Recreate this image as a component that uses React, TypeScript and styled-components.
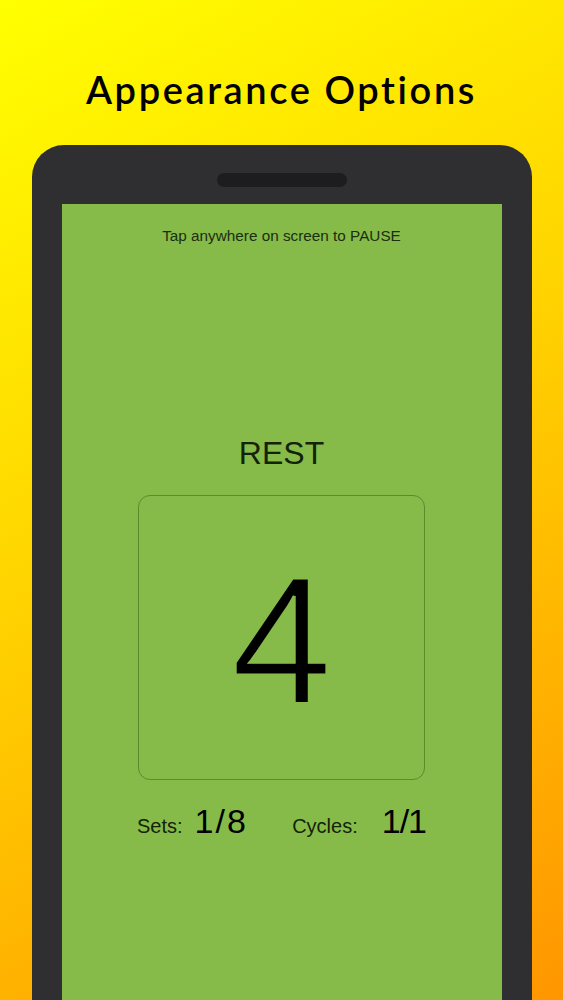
import React from "react";
import styled, { createGlobalStyle } from "styled-components";

const Global = createGlobalStyle`
  html, body { margin: 0; padding: 0; }
  body { font-family: "Liberation Sans", Arial, sans-serif; }
`;

const Page = styled.div`
  width: 563px;
  height: 1000px;
  overflow: hidden;
  background: linear-gradient(150deg, #ffff00 0%, #ffd400 45%, #ff9600 100%);
  display: flex;
  flex-direction: column;
  align-items: center;
`;

const Title = styled.h1`
  margin: 0;
  padding-top: 67px;
  height: 145px;
  box-sizing: border-box;
  font-family: "Lato", "Noto Sans", sans-serif;
  font-weight: 600;
  font-size: 38px;
  line-height: 44px;
  letter-spacing: 2.6px;
  color: #000;
`;

const Phone = styled.div`
  width: 500px;
  flex: 1;
  background: #2f2f31;
  border-radius: 32px 32px 0 0;
  display: flex;
  flex-direction: column;
  align-items: center;
  padding: 28px 30px 0;
  box-sizing: border-box;
`;

const Speaker = styled.div`
  width: 130px;
  height: 14px;
  border-radius: 7px;
  background: #1d1d1f;
  margin-bottom: 17px;
`;

const Screen = styled.div`
  width: 440px;
  flex: 1;
  background: #86bb4a;
  display: flex;
  flex-direction: column;
  align-items: center;
`;

const Hint = styled.div`
  margin-top: 24px;
  font-size: 15.3px;
  line-height: 16px;
  color: #1b2e10;
`;

const Phase = styled.div`
  margin-top: 191px;
  font-size: 32px;
  line-height: 36px;
  color: #142208;
`;

const CountBox = styled.div`
  margin-top: 24px;
  width: 287px;
  height: 285px;
  box-sizing: border-box;
  border: 1px solid #5b8c2c;
  border-radius: 12px;
  display: flex;
  align-items: center;
  justify-content: center;
`;

const Count = styled.div`
  font-family: "Liberation Sans", Arial, sans-serif;
  font-size: 182px;
  line-height: 1;
  color: #000;
  -webkit-text-stroke: 3px #86bb4a;
  margin-top: 4px;
`;

const Stats = styled.div`
  margin-top: 22px;
  width: 289px;
  display: flex;
  align-items: baseline;
  justify-content: space-between;
`;

const Stat = styled.div<{ gap: number }>`
  display: flex;
  align-items: baseline;
  gap: ${(p) => p.gap}px;
`;

const Label = styled.span`
  font-size: 20px;
  color: #142208;
`;

const Value = styled.span<{ spacing: number }>`
  font-size: 34px;
  letter-spacing: ${(p) => p.spacing}px;
  color: #000;
`;

export default function App() {
  return (
    <>
      <Global />
      <Page>
        <Title>Appearance Options</Title>
        <Phone>
          <Speaker />
          <Screen>
            <Hint>Tap anywhere on screen to PAUSE</Hint>
            <Phase>REST</Phase>
            <CountBox>
              <Count>4</Count>
            </CountBox>
            <Stats>
              <Stat gap={12}>
                <Label>Sets:</Label>
                <Value spacing={2}>1/8</Value>
              </Stat>
              <Stat gap={24}>
                <Label>Cycles:</Label>
                <Value spacing={-1}>1/1</Value>
              </Stat>
            </Stats>
          </Screen>
        </Phone>
      </Page>
    </>
  );
}
